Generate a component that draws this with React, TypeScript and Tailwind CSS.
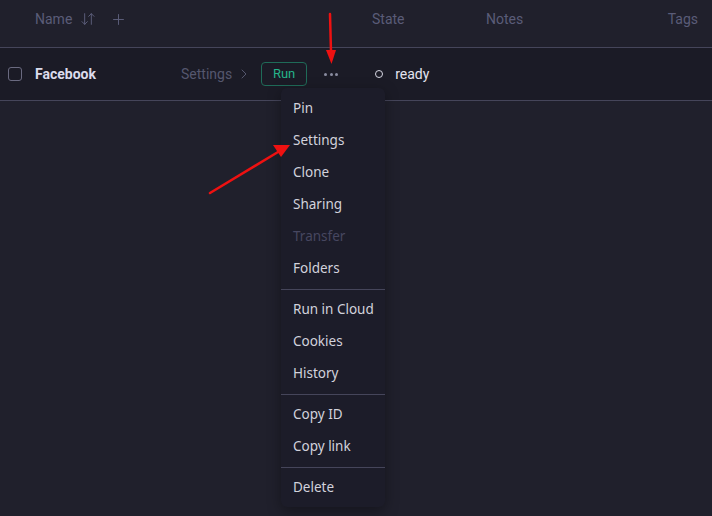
import { ArrowDownUp, ChevronRight, Plus } from "lucide-react";
import React from "react";

type MenuEntry = { label: string; disabled?: boolean } | "sep";

const menu: MenuEntry[] = [
  { label: "Pin" },
  { label: "Settings" },
  { label: "Clone" },
  { label: "Sharing" },
  { label: "Transfer", disabled: true },
  { label: "Folders" },
  "sep",
  { label: "Run in Cloud" },
  { label: "Cookies" },
  { label: "History" },
  "sep",
  { label: "Copy ID" },
  { label: "Copy link" },
  "sep",
  { label: "Delete" },
];

function ActionMenu() {
  return (
    <div className="absolute left-[281px] top-[88px] w-[104px] rounded-md bg-[#1c1c29] pb-[3px] pt-[5px] shadow-[0_4px_14px_rgba(0,0,0,0.35)] font-['Noto_Sans',sans-serif] text-[13.5px]">
      {menu.map((item, i) =>
        item === "sep" ? (
          <div key={i} className="my-1 h-px bg-[#45455a]" />
        ) : (
          <div
            key={i}
            className={`flex h-8 items-center whitespace-nowrap px-3 ${
              item.disabled ? "text-[#474760]" : "text-[#d2d2dc]"
            }`}
          >
            {item.label}
          </div>
        ),
      )}
    </div>
  );
}

function Arrows() {
  return (
    <svg
      className="pointer-events-none absolute left-0 top-0"
      width="712"
      height="516"
      viewBox="0 0 712 516"
    >
      <line x1="330" y1="14" x2="331" y2="52" stroke="#ee1111" strokeWidth="2.5" strokeLinecap="round" />
      <polygon points="326,50 336,50 331.5,64" fill="#ee1111" />
      <line x1="210" y1="193" x2="278" y2="152" stroke="#ee1111" strokeWidth="2.5" strokeLinecap="round" />
      <polygon points="273,145 281,157 290,145" fill="#ee1111" />
    </svg>
  );
}

export default function App() {
  return (
    <div className="relative h-[516px] w-[712px] overflow-hidden bg-[#20202c] font-['Roboto',sans-serif] text-sm">
      {/* Header */}
      <div className="flex h-[48px] items-center border-b border-[#45455a] pb-[9px] text-[#5a5c78]">
        <div className="flex w-[372px] items-center pl-[35px]">
          <span>Name</span>
          <ArrowDownUp className="ml-[8px] h-[16px] w-[16px]" strokeWidth={1.5} />
          <Plus className="ml-[14px] h-[17px] w-[17px]" strokeWidth={1.4} />
        </div>
        <div className="w-[114px]">State</div>
        <div className="flex-1">Notes</div>
        <div className="pr-[14px]">Tags</div>
      </div>

      {/* Row */}
      <div className="flex h-[53px] items-center border-b border-[#45455a] bg-[#1b1b26]">
        <div className="ml-[8px] h-[14px] w-[14px] rounded-[3px] border border-[#6a6a80]" />
        <div className="ml-[13px] w-[146px] font-bold text-[#dcdcec]">Facebook</div>
        <div className="flex items-center text-[#55576e]">
          <span>Settings</span>
          <ChevronRight className="ml-[4px] h-[16px] w-[16px]" strokeWidth={1.5} />
        </div>
        <div className="ml-[9px] flex h-[24px] w-[46px] items-center justify-center rounded-[4px] border border-[#1f6b58] text-[13px] text-[#25b48a]">
          Run
        </div>
        <div className="ml-[17px] flex w-[14px] items-center justify-between">
          <span className="h-[3px] w-[3px] rounded-full bg-[#8a8ca0]" />
          <span className="h-[3px] w-[3px] rounded-full bg-[#8a8ca0]" />
          <span className="h-[3px] w-[3px] rounded-full bg-[#8a8ca0]" />
        </div>
        <div className="ml-[37px] h-[8px] w-[8px] rounded-full border-[1.5px] border-[#d8d8e4]" />
        <div className="ml-[12px] text-[#e4e4f0]">ready</div>
      </div>

      <ActionMenu />
      <Arrows />
    </div>
  );
}
